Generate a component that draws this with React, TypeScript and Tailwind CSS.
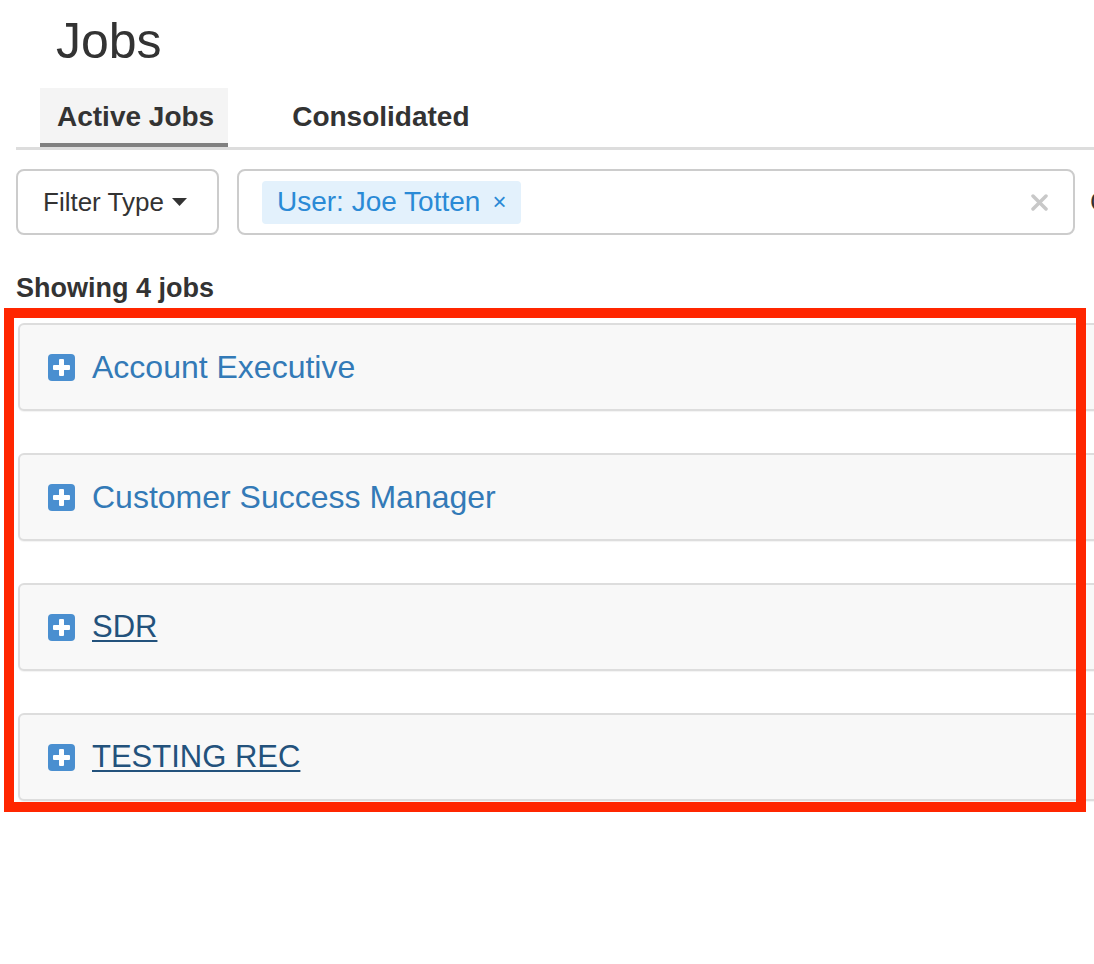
import React from "react";

interface Job {
  id: string;
  title: string;
  visited?: boolean;
}

const jobs: Job[] = [
  { id: "ae", title: "Account Executive" },
  { id: "csm", title: "Customer Success Manager" },
  { id: "sdr", title: "SDR", visited: true },
  { id: "test", title: "TESTING REC", visited: true },
];

const PlusBox = () => (
  <span className="relative flex h-[27px] w-[27px] shrink-0 items-center justify-center rounded-[4px] bg-[#4a8fd0]">
    <span className="absolute h-[17px] w-[5px] rounded-[1px] bg-white" />
    <span className="absolute h-[5px] w-[17px] rounded-[1px] bg-white" />
  </span>
);

const App = () => {
  return (
    <div className="min-h-[964px] w-full overflow-hidden bg-white font-['Liberation_Sans',Arial,sans-serif] text-[#333]">
      <div className="relative w-[1200px] pl-4 pt-[16px]">
        <h1 className="ml-[40px] text-[50px] leading-[50px] font-normal">Jobs</h1>

        {/* tabs */}
        <ul className="mt-[22px] flex border-b-[3px] border-[#ddd] pl-6">
          <li className="h-[59px] border-b-4 border-[#808080] bg-[#f4f4f4] pl-[17px] pr-[14px] pt-[15px] text-[28px] font-bold leading-[28px] text-[#333]">
            Active Jobs
          </li>
          <li className="ml-[64px] h-[59px] pt-[15px] text-[28px] font-bold leading-[28px] text-[#333]">
            Consolidated
          </li>
        </ul>

        {/* filter row */}
        <div className="mt-[19px] flex items-center">
          <button className="flex h-[66px] w-[203px] shrink-0 items-center rounded-lg border-2 border-[#ccc] bg-white pl-[25px] text-[26px] leading-[30px] text-[#333]">
            Filter Type
            <svg className="ml-[8px]" width="15" height="8" viewBox="0 0 15 8">
              <path d="M0 0 L15 0 L7.5 8 Z" fill="#333" />
            </svg>
          </button>
          <div className="ml-[18px] flex h-[66px] w-[838px] shrink-0 items-center rounded-lg border-2 border-[#ccc] bg-white pl-[23px] pr-[25px]">
            <span className="flex h-[43px] w-[259px] items-center rounded-[4px] bg-[#e3f1fc] pl-[15px] text-[28px] leading-[30px] text-[#2a8ad6]">
              User: Joe Totten
              <span className="ml-[12px] text-[24px]">×</span>
            </span>
            <svg className="ml-auto" width="17" height="17" viewBox="0 0 17 17">
              <path d="M2 2 L15 15 M15 2 L2 15" stroke="#c8c8c8" strokeWidth="3.5" strokeLinecap="round" />
            </svg>
          </div>
          <span className="ml-[15px] shrink-0 text-[27px] leading-[30px] text-[#333]">Clear</span>
        </div>

        <div className="mt-[38px] text-[27px] font-bold leading-[30px] text-[#333]">
          Showing 4 jobs
        </div>

        {/* job panels */}
        <div className="ml-[2px] mt-[20px] flex flex-col gap-[42px]">
          {jobs.map((job) => (
            <div
              key={job.id}
              className="flex h-[88px] items-center rounded-md border-2 border-[#ddd] bg-[#f8f8f8] pl-[28px] shadow-[0_1px_1px_rgba(0,0,0,0.05)]"
            >
              <PlusBox />
              <a
                href="#"
                className={
                  job.visited
                    ? "ml-[17px] text-[31px] leading-[36px] text-[#23527c] underline decoration-2 underline-offset-[3px]"
                    : "ml-[17px] text-[32px] leading-[36px] text-[#337ab7]"
                }
              >
                {job.title}
              </a>
            </div>
          ))}
        </div>

        {/* annotation box */}
        <div className="pointer-events-none absolute left-[4px] top-[308px] h-[504px] w-[1082px] border-[10px] border-[#ff2600]" />
      </div>
    </div>
  );
};

export default App;
